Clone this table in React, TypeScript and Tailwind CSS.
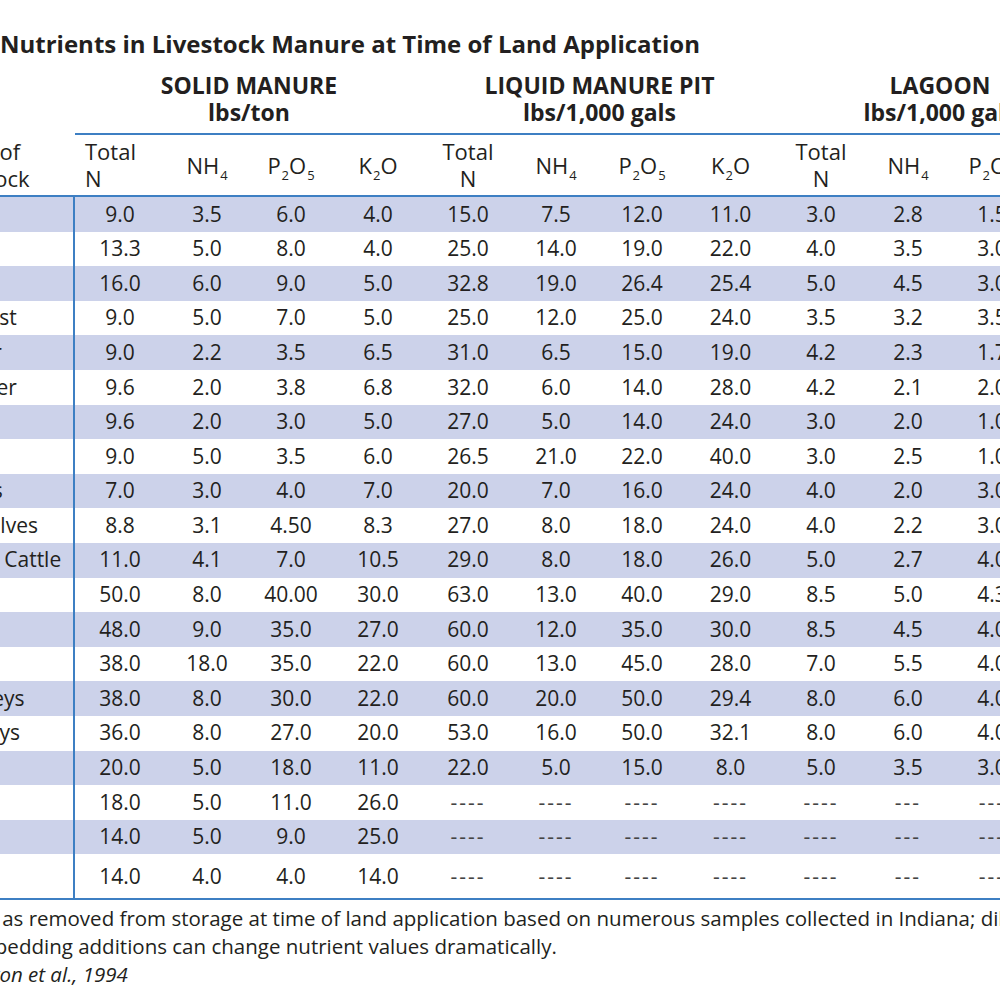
import React from "react";

type Group = { title: string; sub: string; w: string };
const groups: Group[] = [
  { title: "SOLID MANURE", sub: "lbs/ton", w: "w-[348px]" },
  { title: "LIQUID MANURE PIT", sub: "lbs/1,000 gals", w: "w-[353px]" },
  { title: "LAGOON", sub: "lbs/1,000 gals", w: "w-[328px]" },
];

const colW = [
  "w-[90px]", "w-[84px]", "w-[84px]", "w-[90px]",
  "w-[90px]", "w-[86px]", "w-[86px]", "w-[91px]",
  "w-[90px]", "w-[84px]", "w-[84px]", "w-[70px]",
];

const kinds = ["TN", "NH4", "P2O5", "K2O", "TN", "NH4", "P2O5", "K2O", "TN", "NH4", "P2O5", "K2O"];

const D4 = "----";
const D3 = "---";

const rows: { label: string; pl: string; v: string[] }[] = [
  { label: "Farrow", pl: "pl-[20px]", v: ["9.0", "3.5", "6.0", "4.0", "15.0", "7.5", "12.0", "11.0", "3.0", "2.8", "1.5", "3.0"] },
  { label: "Nursery", pl: "pl-[20px]", v: ["13.3", "5.0", "8.0", "4.0", "25.0", "14.0", "19.0", "22.0", "4.0", "3.5", "3.0", "4.0"] },
  { label: "Finisher", pl: "pl-[20px]", v: ["16.0", "6.0", "9.0", "5.0", "32.8", "19.0", "26.4", "25.4", "5.0", "4.5", "3.0", "5.0"] },
  { label: "Breed/Gest", pl: "pl-[16px]", v: ["9.0", "5.0", "7.0", "5.0", "25.0", "12.0", "25.0", "24.0", "3.5", "3.2", "3.5", "4.0"] },
  { label: "Dry Heifer", pl: "pl-[12px]", v: ["9.0", "2.2", "3.5", "6.5", "31.0", "6.5", "15.0", "19.0", "4.2", "2.3", "1.7", "4.5"] },
  { label: "Dairy Steer", pl: "pl-[19px]", v: ["9.6", "2.0", "3.8", "6.8", "32.0", "6.0", "14.0", "28.0", "4.2", "2.1", "2.0", "5.0"] },
  { label: "Dry Cow", pl: "pl-[16px]", v: ["9.6", "2.0", "3.0", "5.0", "27.0", "5.0", "14.0", "24.0", "3.0", "2.0", "1.0", "4.0"] },
  { label: "Bulls", pl: "pl-[20px]", v: ["9.0", "5.0", "3.5", "6.0", "26.5", "21.0", "22.0", "40.0", "3.0", "2.5", "1.0", "6.0"] },
  { label: "Beef Bulls", pl: "pl-[16px]", v: ["7.0", "3.0", "4.0", "7.0", "20.0", "7.0", "16.0", "24.0", "4.0", "2.0", "3.0", "5.0"] },
  { label: "Heifer Calves", pl: "pl-[20px]", v: ["8.8", "3.1", "4.50", "8.3", "27.0", "8.0", "18.0", "24.0", "4.0", "2.2", "3.0", "5.0"] },
  { label: "Finishing Cattle", pl: "pl-[22px]", v: ["11.0", "4.1", "7.0", "10.5", "29.0", "8.0", "18.0", "26.0", "5.0", "2.7", "4.0", "6.0"] },
  { label: "Layers", pl: "pl-[20px]", v: ["50.0", "8.0", "40.00", "30.0", "63.0", "13.0", "40.0", "29.0", "8.5", "5.0", "4.3", "8.0"] },
  { label: "Broilers", pl: "pl-[20px]", v: ["48.0", "9.0", "35.0", "27.0", "60.0", "12.0", "35.0", "30.0", "8.5", "4.5", "4.0", "8.0"] },
  { label: "Pullets", pl: "pl-[20px]", v: ["38.0", "18.0", "35.0", "22.0", "60.0", "13.0", "45.0", "28.0", "7.0", "5.5", "4.0", "7.0"] },
  { label: "Tom Turkeys", pl: "pl-[9px]", v: ["38.0", "8.0", "30.0", "22.0", "60.0", "20.0", "50.0", "29.4", "8.0", "6.0", "4.0", "8.0"] },
  { label: "Hen Turkeys", pl: "pl-[8px]", v: ["36.0", "8.0", "27.0", "20.0", "53.0", "16.0", "50.0", "32.1", "8.0", "6.0", "4.0", "8.0"] },
  { label: "Ducks", pl: "pl-[20px]", v: ["20.0", "5.0", "18.0", "11.0", "22.0", "5.0", "15.0", "8.0", "5.0", "3.5", "3.0", "5.0"] },
  { label: "Sheep", pl: "pl-[20px]", v: ["18.0", "5.0", "11.0", "26.0", D4, D4, D4, D4, D4, D3, D3, D3] },
  { label: "Goats", pl: "pl-[20px]", v: ["14.0", "5.0", "9.0", "25.0", D4, D4, D4, D4, D4, D3, D3, D3] },
  { label: "Horses", pl: "pl-[20px]", v: ["14.0", "4.0", "4.0", "14.0", D4, D4, D4, D4, D4, D3, D3, D3] },
];

const subCls = "text-[13px] -bottom-[6px] ml-[1px]";

function HeaderCell({ kind, first }: { kind: string; first: boolean }) {
  if (kind === "TN") {
    return (
      <div className={first ? "flex flex-col items-start pl-[10px]" : "flex flex-col items-center"}>
        <span>Total</span>
        <span>N</span>
      </div>
    );
  }
  if (kind === "NH4") {
    return (
      <span>
        NH<sub className={subCls}>4</sub>
      </span>
    );
  }
  if (kind === "P2O5") {
    return (
      <span>
        P<sub className={subCls}>2</sub>O<sub className={subCls}>5</sub>
      </span>
    );
  }
  return (
    <span>
      K<sub className={subCls}>2</sub>O
    </span>
  );
}

export default function App() {
  return (
    <div className="w-[1000px] h-[1000px] overflow-hidden bg-white text-[#231f20] font-['Open_Sans',sans-serif]">
      <div className="pt-[30px] h-[58px] text-[24px] font-bold leading-[28px] whitespace-nowrap">
        Nutrients in Livestock Manure at Time of Land Application
      </div>

      <div className="-ml-[110px] w-[1250px]">
        {/* group headers */}
        <div className="flex mt-[14px]">
          <div className="w-[185px] shrink-0" />
          <div className="flex border-b-2 border-[#3d7fc3]">
            {groups.map((g) => (
              <div
                key={g.title}
                className={`${g.w} shrink-0 h-[61px] flex flex-col items-center text-[23px] font-bold leading-[27px] whitespace-nowrap`}
              >
                <span>{g.title}</span>
                <span>{g.sub}</span>
              </div>
            ))}
          </div>
        </div>

        {/* column headers */}
        <div className="flex h-[62px] border-b-2 border-[#3d7fc3] text-[22px] leading-[27px]">
          <div className="w-[185px] shrink-0 flex flex-col items-center justify-center">
            <span>Type of</span>
            <span>Livestock</span>
          </div>
          {kinds.map((k, i) => (
            <div key={i} className={`${colW[i]} shrink-0 flex items-center ${i === 0 ? "justify-start" : "justify-center"}`}>
              <HeaderCell kind={k} first={i === 0} />
            </div>
          ))}
        </div>

        {/* data rows */}
        <div className="border-b-2 border-[#3d7fc3] text-[21px]">
          {rows.map((r, ri) => (
            <div
              key={ri}
              className={`flex ${ri === rows.length - 1 ? "h-[44px]" : "h-[34.6px]"} ${ri % 2 === 0 ? "bg-[#ccd2ea]" : "bg-white"}`}
            >
              <div className={`w-[185px] shrink-0 border-r-2 border-[#3d7fc3] flex items-center whitespace-nowrap ${r.pl}`}>
                {r.label}
              </div>
              {r.v.map((val, ci) => (
                <div
                  key={ci}
                  className={`${colW[ci]} shrink-0 flex items-center justify-center ${val.startsWith("-") ? "tracking-[2px] text-[#444]" : ""}`}
                >
                  {val}
                </div>
              ))}
            </div>
          ))}
        </div>
      </div>

      <div className="pt-[4px] text-[20.5px] leading-[28px] whitespace-nowrap">
        <div className="-ml-[78px]">
          Manure as removed from storage at time of land application based on numerous samples collected in Indiana; dilution with water or
        </div>
        <div className="-ml-[47px]">and bedding additions can change nutrient values dramatically.</div>
        <div className="-ml-[108px] italic">Source: Sutton et al., 1994</div>
      </div>
    </div>
  );
}
